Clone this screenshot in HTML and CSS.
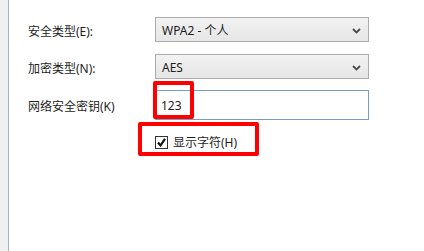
FILE: index.html
```html
<!DOCTYPE html>
<html lang="zh-CN">
<head>
<meta charset="utf-8">
<link rel="stylesheet" href="styles.css">
</head>
<body>
<div class="window">
  <div class="side"></div>
  <div class="content">
    <div class="form">
      <label class="lbl">安全类型(E):</label>
      <div class="combo"><span>WPA2 - 个人</span><svg class="chev" width="9" height="6" viewBox="0 0 9 6"><path d="M1 1 L4.5 4.5 L8 1" fill="none" stroke="#4a4a4a" stroke-width="1.8"/></svg></div>
      <label class="lbl">加密类型(N):</label>
      <div class="combo"><span>AES</span><svg class="chev" width="9" height="6" viewBox="0 0 9 6"><path d="M1 1 L4.5 4.5 L8 1" fill="none" stroke="#4a4a4a" stroke-width="1.8"/></svg></div>
      <label class="lbl">网络安全密钥(K)</label>
      <div class="textbox"><span>123</span><div class="mark mark-key"></div></div>
      <div></div>
      <div class="checkrow">
        <span class="check"><svg width="11" height="11" viewBox="0 0 11 11"><path d="M2 5.5 L4.5 8.5 L9 1.8" fill="none" stroke="#111" stroke-width="2.2"/></svg></span>
        <span class="checklabel">显示字符(H)</span>
        <div class="mark mark-check"></div>
      </div>
    </div>
  </div>
</div>
</body>
</html>
```
FILE: styles.css
```css
html, body {
  margin: 0;
  padding: 0;
  background: #fff;
}
body {
  font-family: "Noto Sans", "Noto Sans CJK SC", sans-serif;
  font-size: 12px;
  color: #1e1e1e;
}
.window {
  display: flex;
  width: 424px;
  height: 251px;
  overflow: hidden;
}
.side {
  width: 8px;
  background: #f0f0f0;
  border-right: 1px solid #a0b4c8;
  flex: none;
}
.content {
  flex: 1;
  padding: 17px 0 0 19px;
}
.form {
  display: grid;
  grid-template-columns: 127px 214px;
  grid-template-rows: 25px 25px 29px 22px;
  row-gap: 12px;
}
.form > :nth-child(5), .form > :nth-child(6) {
  margin-top: -1px;
}
.lbl {
  display: flex;
  align-items: center;
  padding-top: 2px;
  white-space: nowrap;
}
.combo {
  box-sizing: border-box;
  border: 1px solid #acacac;
  background: linear-gradient(#f2f2f2, #e6e6e6);
  display: flex;
  align-items: center;
  justify-content: space-between;
  padding: 1px 7px 0 6px;
}
.chev {
  margin-top: 1px;
}
.textbox {
  position: relative;
  box-sizing: border-box;
  border: 1px solid #7a9ebf;
  background: #fff;
  display: flex;
  align-items: center;
  padding: 1px 0 0 5px;
}
.checkrow {
  position: relative;
  display: flex;
  align-items: center;
  gap: 5px;
  margin-top: -2px;
}
.check {
  box-sizing: border-box;
  width: 13px;
  height: 13px;
  border: 1px solid #333;
  background: #fff;
  display: flex;
  align-items: center;
  justify-content: center;
}
.check svg { display: block; }
.mark {
  position: absolute;
  box-sizing: border-box;
  border: 4px solid #f00;
  border-radius: 2px;
}
.mark-key {
  left: -3px;
  top: -10px;
  width: 41px;
  height: 38px;
}
.mark-check {
  left: -17px;
  top: -8px;
  width: 121px;
  height: 34px;
}
```
